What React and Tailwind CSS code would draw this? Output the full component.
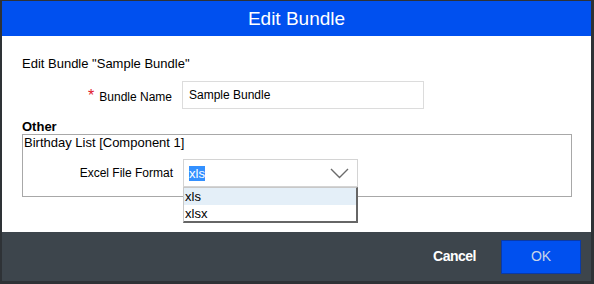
export default function App() {
  return (
    <div className="w-[594px] h-[284px] bg-[#2e3236] pl-[2px] pr-[3px] pt-[1px] pb-[3px] font-['Liberation_Sans',Arial,sans-serif]">
      <div className="flex flex-col h-full bg-white">
        <div className="h-[35px] bg-[#0050ef] flex items-center justify-center text-white text-[19px] leading-none">
          Edit Bundle
        </div>
        <div className="relative flex-1 pl-[20px] pr-[19px] pt-[21px] text-[12px] text-black">
          <div className="leading-[14px] text-[13px]">Edit Bundle "Sample Bundle"</div>
          <div className="flex items-center mt-[10px] h-[28px]">
            <div className="w-[160px] flex justify-end items-center pr-[10px]">
              <span className="text-[#e0162b] text-[16px] leading-none mr-[5px] relative top-[1px]">*</span>
              <span className="relative top-[2px]">Bundle Name</span>
            </div>
            <div className="w-[242px] h-[28px] border border-[#dcdcdc] flex items-center pl-[6px]">Sample Bundle</div>
          </div>
          <div className="font-bold text-[13px] leading-[15px] mt-[10px]">Other</div>
          <div className="border border-[#a8a8a8] h-[63px] pl-[1px]">
            <div className="leading-[15px] text-[13px]">Birthday List [Component 1]</div>
            <div className="flex items-center mt-[9px]">
              <div className="w-[159px] text-right pr-[10px]">Excel File Format</div>
              <div className="w-[175px] h-[28px] border border-[#d4d4d4] flex items-center pl-[5px] pr-[8px] justify-between">
                <span className="bg-[#3390ff] text-white leading-[15px] text-[13px]">xls</span>
                <svg width="19" height="11" viewBox="0 0 19 11" fill="none">
                  <path d="M1 1 L9.5 9.5 L18 1" stroke="#6b6b6b" strokeWidth="1.4" />
                </svg>
              </div>
            </div>
          </div>
          <div className="absolute left-[181px] top-[151px] w-[175px] h-[36px] bg-white border-l border-t border-[#c8c8c8] border-r-2 border-b-2 border-r-[#666] border-b-[#666] text-[13px]">
            <div className="h-[17px] bg-[#e4eff8] leading-[17px] pl-[1px]">xls</div>
            <div className="h-[17px] leading-[17px] pl-[1px]">xlsx</div>
          </div>
        </div>
        <div className="h-[49px] bg-[#3d454c] flex items-center justify-end pr-[10px]">
          <span className="text-white font-bold text-[14px] tracking-[-0.5px] mr-[25px]">Cancel</span>
          <div className="w-[80px] h-[34px] bg-[#0050ef] border border-[#0a3aa8] flex items-center justify-center text-[#c8d4e8] text-[14px]">OK</div>
        </div>
      </div>
    </div>
  );
}
